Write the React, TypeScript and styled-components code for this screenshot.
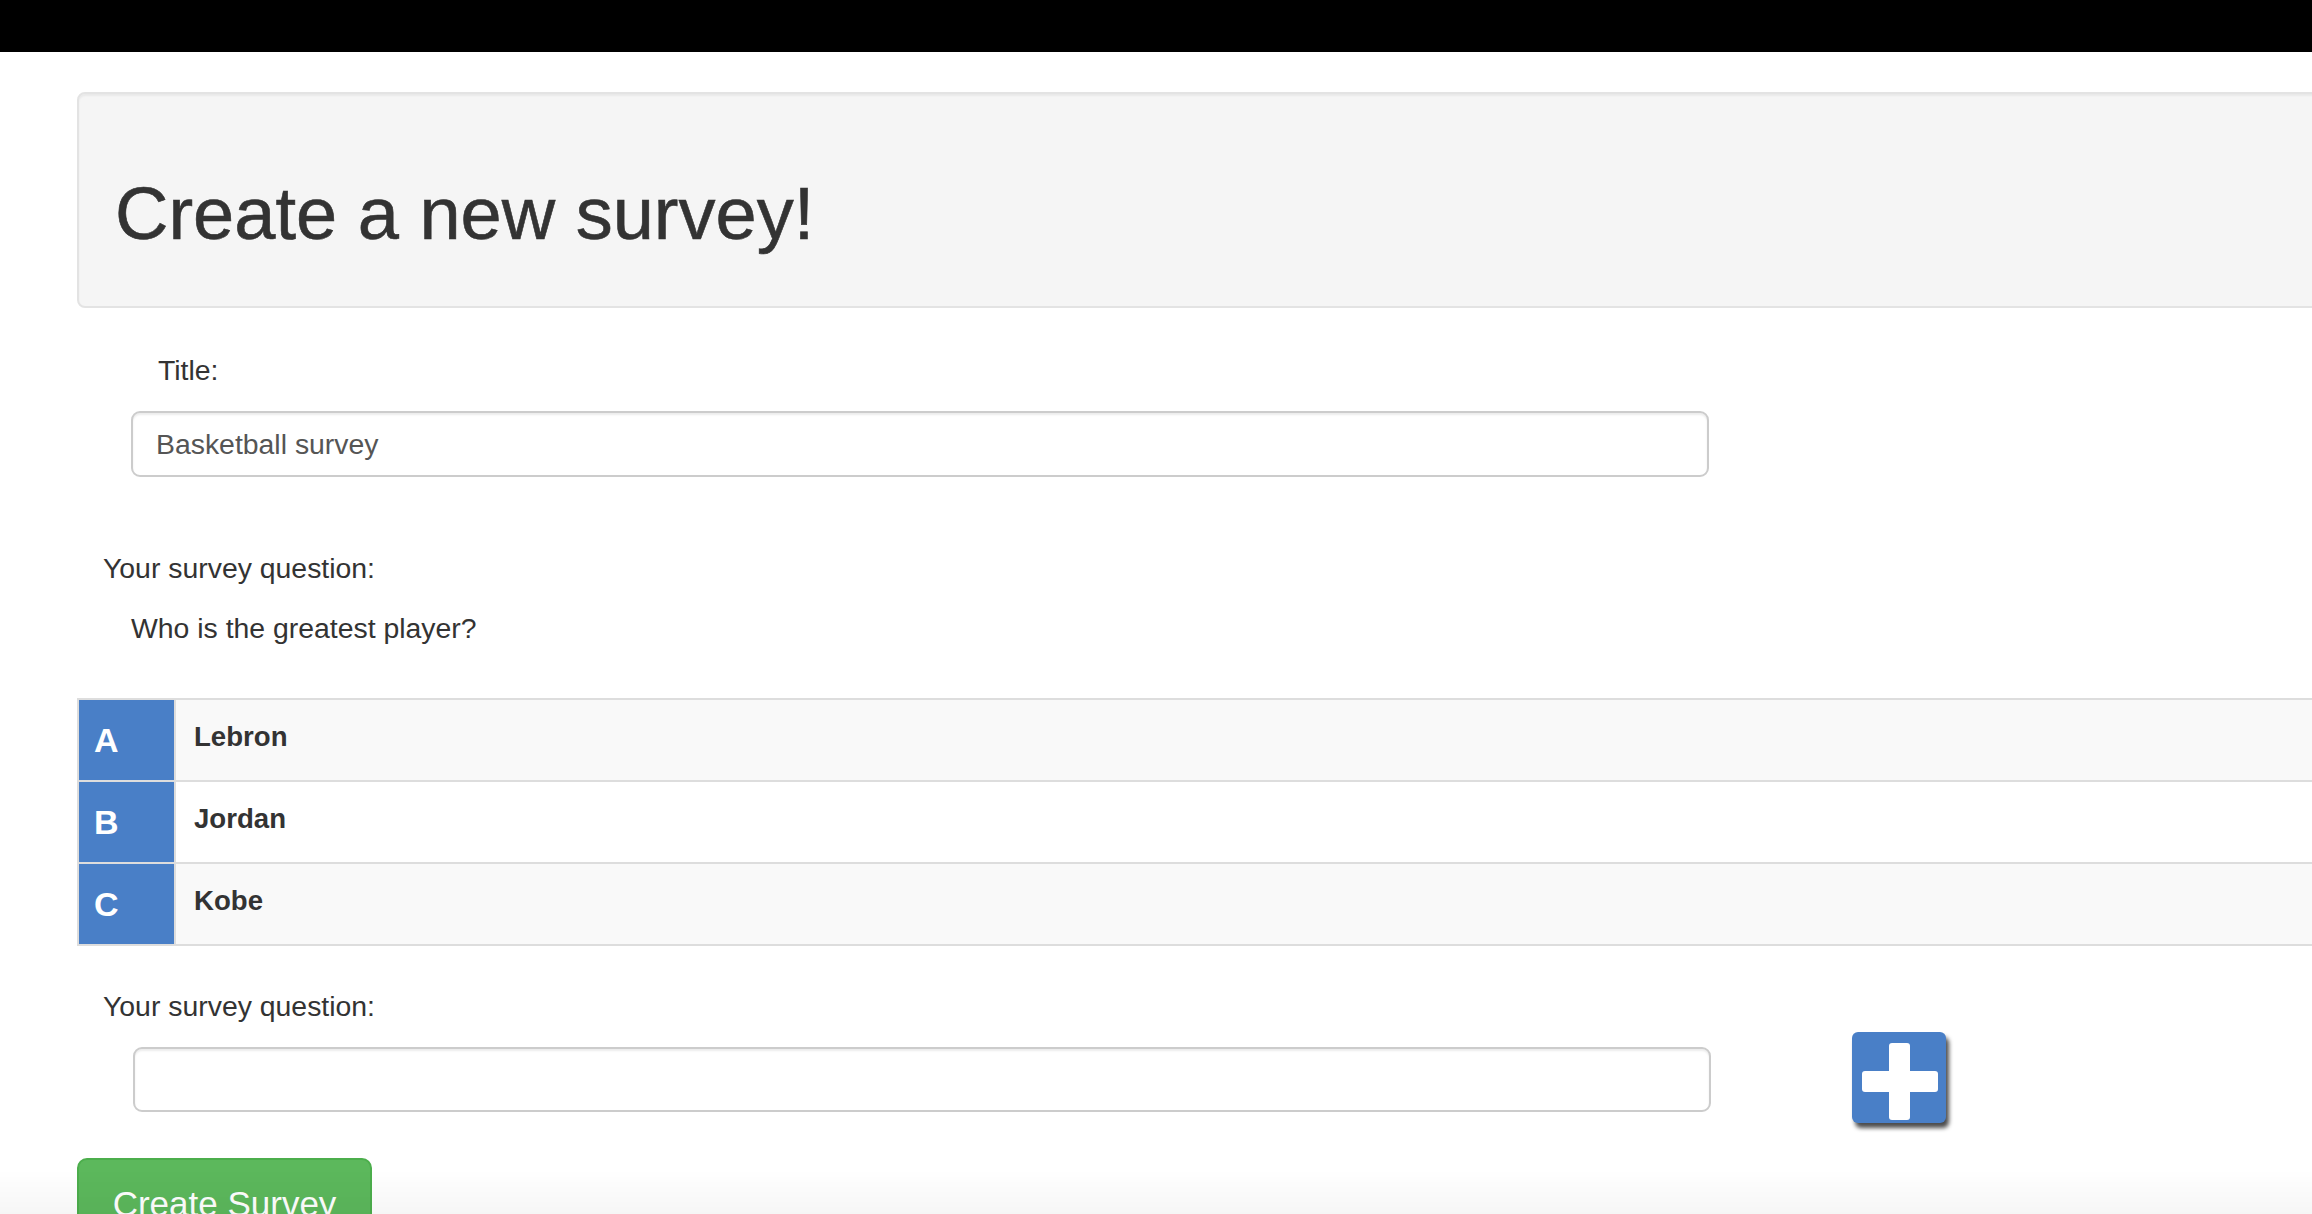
import React from "react";
import styled, { createGlobalStyle } from "styled-components";

const GlobalStyle = createGlobalStyle`
  html, body {
    margin: 0;
    padding: 0;
    background: #ffffff;
    overflow-x: hidden;
  }
  body {
    font-family: "Liberation Sans", Arial, Helvetica, sans-serif;
    color: #333333;
  }
  * { box-sizing: border-box; }
`;

const NavBar = styled.div`
  height: 52px;
  background: #000000;
`;

const Main = styled.main`
  width: calc(100% + 60px);
  padding-left: 77px;
  padding-bottom: 40px;
`;

const Well = styled.section`
  margin-top: 40px;
  height: 216px;
  background: #f5f5f5;
  border: 2px solid #e3e3e3;
  border-radius: 8px;
  box-shadow: inset 0 2px 2px rgba(0, 0, 0, 0.05);
  padding: 80px 0 0 36px;
`;

const Heading = styled.h1`
  margin: 0;
  font-size: 74px;
  line-height: 80px;
  font-weight: 400;
  color: #333333;
  -webkit-text-stroke: 0.6px #333333;
`;

const FieldGroup = styled.div<{ $indent: number }>`
  padding-left: ${(p) => p.$indent}px;
`;

const Label = styled.div<{ $indent: number; $top: number }>`
  padding-left: ${(p) => p.$indent}px;
  margin-top: ${(p) => p.$top}px;
  font-size: 28.4px;
  line-height: 38px;
  color: #333333;
`;

const TextInput = styled.input<{ $top: number }>`
  display: block;
  margin-top: ${(p) => p.$top}px;
  width: 1578px;
  height: 66px;
  padding: 0 23px;
  font-family: "Liberation Sans", Arial, Helvetica, sans-serif;
  font-size: 28.4px;
  color: #555555;
  background: #ffffff;
  border: 2px solid #cccccc;
  border-radius: 9px;
  box-shadow: inset 0 2px 2px rgba(0, 0, 0, 0.075);
  outline: none;
`;

const Choices = styled.div`
  margin-top: 51px;
  border-top: 2px solid #dddddd;
  border-left: 2px solid #dddddd;
`;

const ChoiceRow = styled.div<{ $striped: boolean }>`
  display: grid;
  grid-template-columns: 97px 1fr;
  height: 82px;
  border-bottom: 2px solid #dddddd;
  background: ${(p) => (p.$striped ? "#f9f9f9" : "#ffffff")};
`;

const Letter = styled.div`
  display: flex;
  align-items: center;
  padding-left: 15px;
  background: #497fc7;
  border-right: 2px solid #dddddd;
  color: #ffffff;
  font-size: 34px;
  font-weight: 700;
`;

const Answer = styled.div`
  padding: 0 0 7px 18px;
  font-size: 27.6px;
  line-height: 73px;
  font-weight: 700;
  color: #333333;
`;

const AddRow = styled.div`
  display: flex;
  align-items: flex-start;
  margin-top: 7px;
`;

const QuestionInput = styled(TextInput)`
  margin-left: 56px;
  width: 1578px;
  height: 65px;
`;

const PlusButton = styled.button`
  margin-left: 141px;
  width: 94px;
  height: 91px;
  padding: 0;
  border: none;
  border-radius: 6px;
  background: #497fc7;
  box-shadow: 3px 5px 4px rgba(0, 0, 0, 0.7);
  cursor: pointer;
  display: block;
  svg { display: block; }
`;

const SubmitButton = styled.button`
  display: block;
  margin-top: 35px;
  width: 295px;
  padding: 20px 0 24px;
  font-family: "Liberation Sans", Arial, Helvetica, sans-serif;
  font-size: 35px;
  line-height: 47px;
  color: #ffffff;
  background: #5cb85c;
  border: 2px solid #4cae4c;
  border-radius: 10px;
  cursor: pointer;
`;

const BottomFade = styled.div`
  position: fixed;
  left: 0;
  right: 0;
  bottom: 0;
  height: 44px;
  pointer-events: none;
  background: linear-gradient(to bottom, rgba(0, 0, 0, 0), rgba(0, 0, 0, 0.035));
`;

const choices = [
  { letter: "A", name: "Lebron" },
  { letter: "B", name: "Jordan" },
  { letter: "C", name: "Kobe" },
];

export default function App() {
  return (
    <>
      <GlobalStyle />
      <NavBar />
      <Main>
        <Well>
          <Heading>Create a new survey!</Heading>
        </Well>
        <FieldGroup $indent={54}>
          <Label $indent={27} $top={43}>Title:</Label>
          <TextInput $top={22} defaultValue="Basketball survey" />
        </FieldGroup>
        <Label $indent={26} $top={72}>Your survey question:</Label>
        <Label $indent={54} $top={22}>Who is the greatest player?</Label>
        <Choices>
          {choices.map((c, i) => (
            <ChoiceRow key={c.letter} $striped={i % 2 === 0}>
              <Letter>{c.letter}</Letter>
              <Answer>{c.name}</Answer>
            </ChoiceRow>
          ))}
        </Choices>
        <Label $indent={26} $top={41}>Your survey question:</Label>
        <AddRow>
          <QuestionInput $top={15} />
          <PlusButton aria-label="Add choice">
            <svg width="94" height="91" viewBox="0 0 94 91">
              <rect x="37" y="11" width="21" height="77" rx="3" fill="#ffffff" />
              <rect x="10" y="39" width="76" height="21" rx="3" fill="#ffffff" />
            </svg>
          </PlusButton>
        </AddRow>
        <SubmitButton>Create Survey</SubmitButton>
      </Main>
      <BottomFade />
    </>
  );
}
